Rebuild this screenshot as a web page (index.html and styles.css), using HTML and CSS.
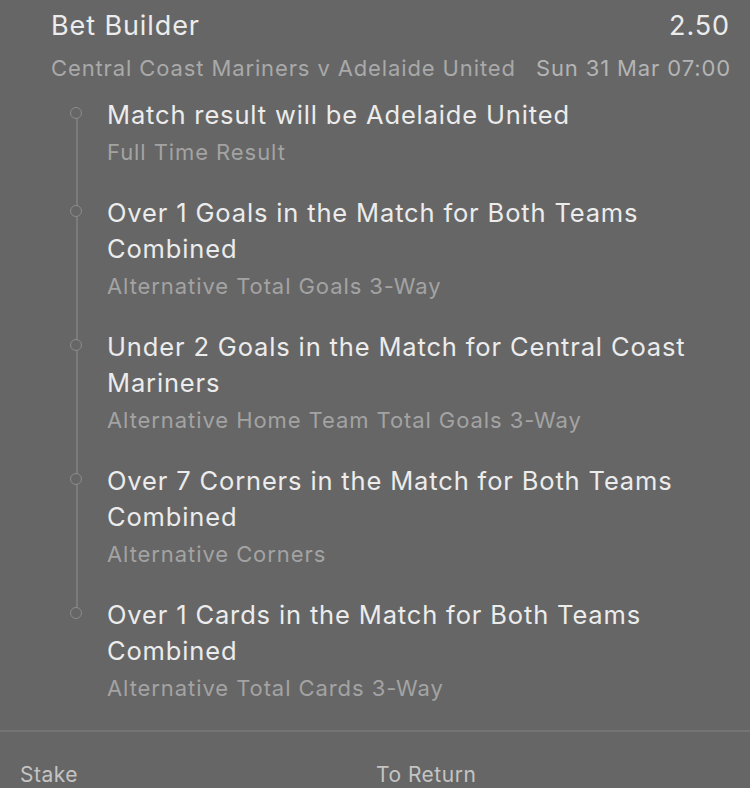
FILE: index.html
```html
<!DOCTYPE html>
<html>
<head>
<meta charset="utf-8">
<link rel="stylesheet" href="styles.css">
</head>
<body>
<div class="slip">
  <div class="header">
    <div class="row title-row">
      <span class="title">Bet Builder</span>
      <span class="odds">2.50</span>
    </div>
    <div class="row meta-row">
      <span class="event">Central Coast Mariners v Adelaide United</span>
      <span class="date">Sun 31 Mar 07:00</span>
    </div>
  </div>
  <ul class="legs">
    <li class="leg">
      <span class="dot"></span>
      <div class="sel">Match result will be Adelaide United</div>
      <div class="market">Full Time Result</div>
    </li>
    <li class="leg">
      <span class="dot"></span>
      <div class="sel">Over 1 Goals in the Match for Both Teams Combined</div>
      <div class="market">Alternative Total Goals 3-Way</div>
    </li>
    <li class="leg">
      <span class="dot"></span>
      <div class="sel">Under 2 Goals in the Match for Central Coast Mariners</div>
      <div class="market">Alternative Home Team Total Goals 3-Way</div>
    </li>
    <li class="leg">
      <span class="dot"></span>
      <div class="sel">Over 7 Corners in the Match for Both Teams Combined</div>
      <div class="market">Alternative Corners</div>
    </li>
    <li class="leg last">
      <span class="dot"></span>
      <div class="sel">Over 1 Cards in the Match for Both Teams Combined</div>
      <div class="market">Alternative Total Cards 3-Way</div>
    </li>
  </ul>
  <div class="footer">
    <span class="flabel">Stake</span>
    <span class="flabel">To Return</span>
  </div>
</div>
</body>
</html>
```

FILE: styles.css
```css
html, body {
  margin: 0;
  padding: 0;
  background: #666666;
}
body {
  font-family: Inter, "Noto Sans", sans-serif;
  -webkit-font-smoothing: antialiased;
  width: 750px;
  height: 788px;
  overflow: hidden;
}
.slip {
  display: flex;
  flex-direction: column;
}
.header {
  padding: 7px 19px 0 51px;
}
.row {
  display: flex;
  justify-content: space-between;
  align-items: center;
}
.title-row {
  height: 36px;
  padding-right: 1px;
}
.title, .odds {
  font-size: 27px;
  letter-spacing: 0.9px;
  color: #ececec;
}
.meta-row {
  margin-top: 7px;
  height: 36px;
}
.event, .date {
  font-size: 22px;
  letter-spacing: 0.88px;
  color: #a9a9a9;
}
.date {
  color: #b4b4b4;
}
.legs {
  list-style: none;
  margin: 11px 0 0 0;
  padding: 0 20px 0 107px;
  position: relative;
}
.leg {
  position: relative;
  margin-bottom: 25px;
}
.leg::before {
  content: "";
  position: absolute;
  left: -31px;
  top: 18px;
  width: 2px;
  height: calc(100% + 25px);
  background: #7b7b7b;
}
.leg.last::before {
  display: none;
}
.dot {
  position: absolute;
  left: -37px;
  top: 10px;
  width: 10px;
  height: 10px;
  border: 1.7px solid #8c8c8c;
  border-radius: 50%;
  background: #666666;
  z-index: 1;
}
.sel {
  font-size: 25.5px;
  letter-spacing: 0.85px;
  line-height: 36px;
  color: #ececec;
}
.market {
  font-size: 22px;
  letter-spacing: 0.92px;
  line-height: 36px;
  margin-top: 1px;
  color: #a3a3a3;
}
.leg.last {
  margin-bottom: 24px;
}
.footer {
  border-top: 2px solid #747474;
  display: grid;
  grid-template-columns: 1fr 1fr;
  padding: 25px 20px 0 20px;
}
.flabel {
  font-size: 21px;
  letter-spacing: 0.5px;
  line-height: 36px;
  color: #c4c4c4;
}
.flabel:last-child {
  padding-left: 1px;
}
```
